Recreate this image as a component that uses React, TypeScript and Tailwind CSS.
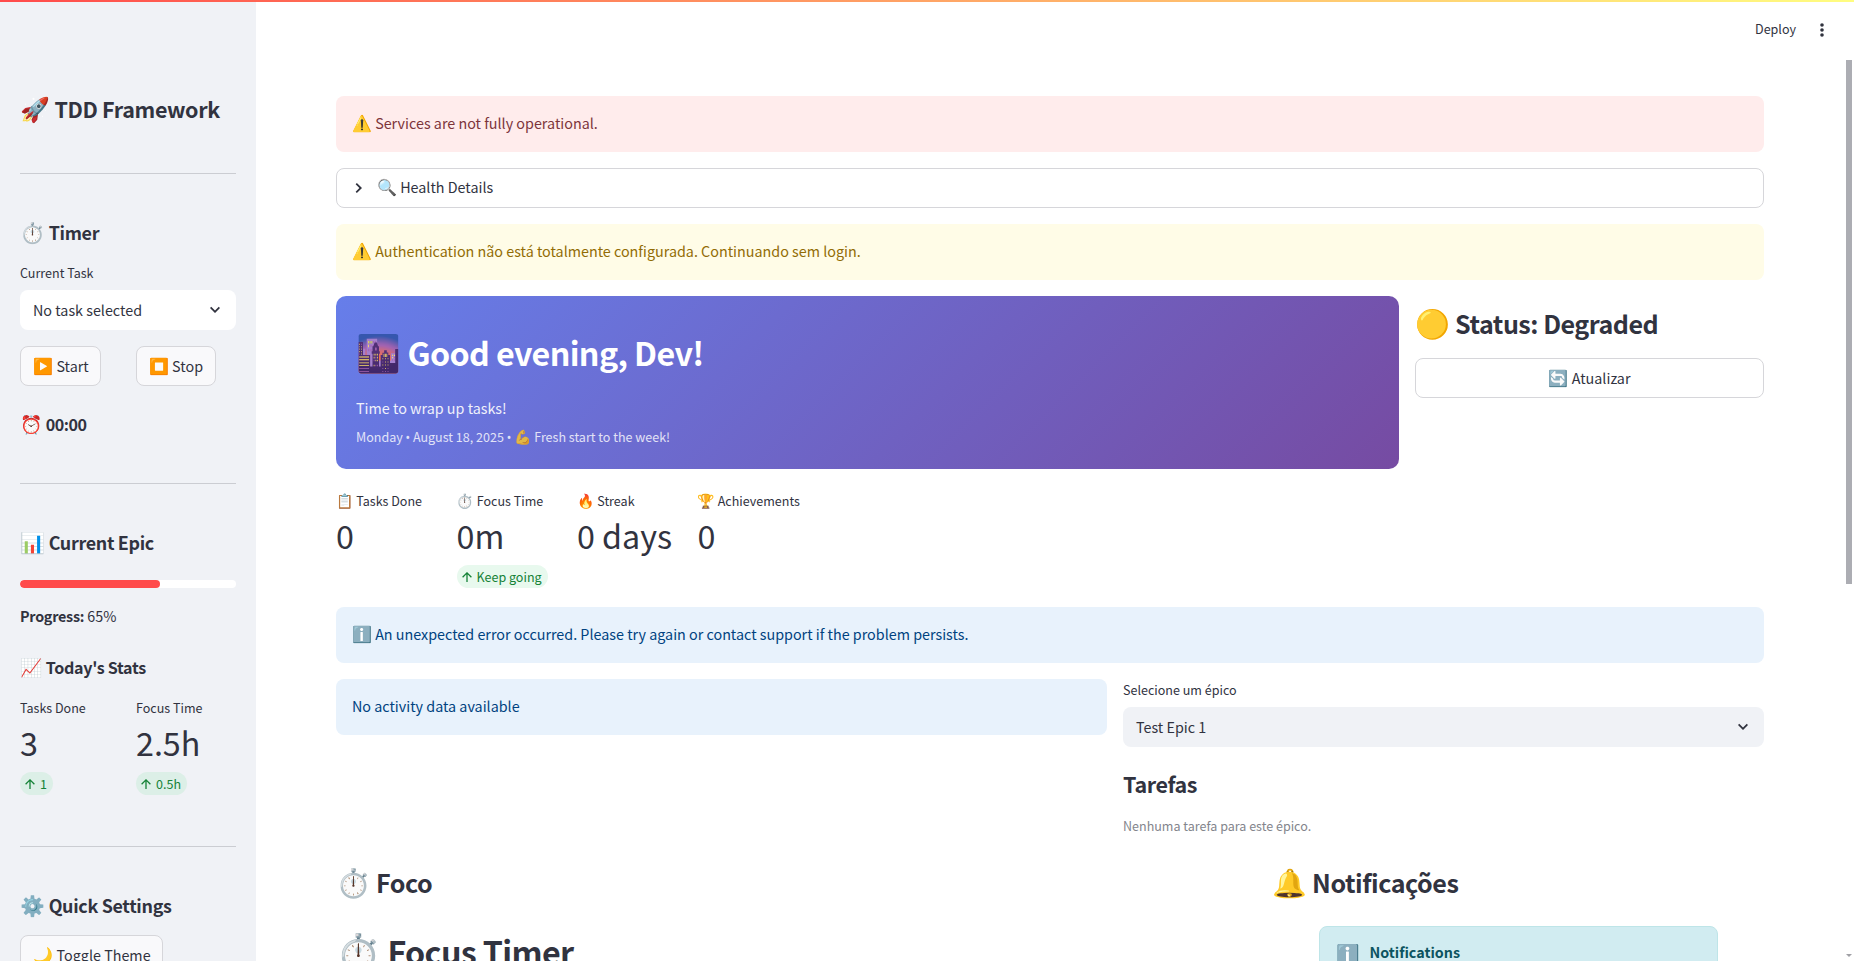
import type { ReactNode } from "react";

function Emoji({ children, className }: { children: ReactNode; className: string }) {
  return <span className={`font-normal leading-none tracking-normal ${className}`}>{children}</span>;
}

function Bullet() {
  return <span className="font-['Noto_Sans',sans-serif] text-[12px] leading-none">•</span>;
}

function Chevron({ className = "" }: { className?: string }) {
  return (
    <svg viewBox="0 0 8 8" className={className} fill="currentColor">
      <path d="M0 2.3l1-1 3 3 3-3 1 1-4 4.1z" />
    </svg>
  );
}

function Label({ icon, children }: { icon?: string; children: ReactNode }) {
  return (
    <div className="h-5 whitespace-nowrap text-[12.54px] leading-5">
      {icon && <Emoji className="text-[14px]">{icon}</Emoji>}
      {icon && " "}
      {children}
    </div>
  );
}

function Delta({ children, className }: { children: ReactNode; className: string }) {
  return (
    <div className={`flex h-[23px] w-fit items-center gap-[5px] rounded-full pl-[5px] pr-1.5 text-[12.54px] leading-[23px] whitespace-nowrap text-[#158237] ${className}`}>
      <svg viewBox="0 0 10 10" className="size-[10px]" fill="none" stroke="currentColor" strokeWidth="1.3">
        <path d="M5 10V1M.6 5.2L5 .9l4.4 4.3" />
      </svg>
      <span>{children}</span>
    </div>
  );
}

function Metric({ icon, label, value, delta, deltaClass = "bg-[#e8f9ee]" }: { icon?: string; label: string; value: string; delta?: string; deltaClass?: string }) {
  return (
    <div>
      <Label icon={icon}>{label}</Label>
      <div className="h-[54px] whitespace-nowrap text-[32.24px] leading-[49px]">{value}</div>
      {delta && <Delta className={deltaClass}>{delta}</Delta>}
    </div>
  );
}

function Button({ icon, children, className }: { icon: string; children: ReactNode; className: string }) {
  return (
    <button className={`h-10 shrink-0 whitespace-nowrap rounded-lg border border-[#d6d6da] text-center text-[14.33px] leading-[36px] ${className}`}>
      <Emoji className="text-[16px]">{icon}</Emoji> {children}
    </button>
  );
}

function Alert({ icon, children, className }: { icon?: string; children: ReactNode; className: string }) {
  return (
    <div className={`h-14 rounded-lg px-4 text-[14.33px] leading-[54px] ${className}`}>
      {icon && <Emoji className="text-[16px]">{icon}</Emoji>}
      {icon && " "}
      {children}
    </div>
  );
}

function Select({ children, className }: { children: ReactNode; className: string }) {
  return (
    <div className={`flex h-10 items-center justify-between rounded-lg pl-[13px] pr-4 text-[14.33px] leading-[39px] ${className}`}>
      <span className="h-10">{children}</span>
      <Chevron className="size-[10px]" />
    </div>
  );
}

function SideHeading({ icon, children }: { icon: string; children: ReactNode }) {
  return (
    <h2 className="h-6 whitespace-nowrap text-[17.9px] font-bold leading-[23px] tracking-[-0.32px]">
      <Emoji className="text-[20px]">{icon}</Emoji> {children}
    </h2>
  );
}

function Sidebar() {
  return (
    <aside className="h-full w-64 shrink-0 overflow-hidden bg-[#f0f2f6] px-5 pt-[93px]">
      <h1 className="h-[33px] whitespace-nowrap text-[21.5px] font-bold leading-8 tracking-[-0.34px]">
        <Emoji className="text-[24px]">🚀</Emoji> TDD Framework
      </h1>
      <hr className="mt-[47px] border-[#cbcdd2]" />
      <div className="mt-[47px]">
        <SideHeading icon="⏱️">Timer</SideHeading>
      </div>
      <div className="mt-[18px]">
        <Label>Current Task</Label>
      </div>
      <Select className="mt-[7px] bg-white">No task selected</Select>
      <div className="mt-4 flex">
        <Button icon="▶️" className="mr-[35px] w-[81px] bg-[#f9f9fb] pl-px">Start</Button>
        <Button icon="⏹️" className="w-20 bg-[#f9f9fb]">Stop</Button>
      </div>
      <div className="mt-[26px] h-6 text-[16.1px] font-bold leading-6 tracking-[-0.45px]">
        <Emoji className="text-[18px]">⏰</Emoji> 00:00
      </div>
      <hr className="mt-[47px] border-[#cbcdd2]" />
      <div className="mt-[47px]">
        <SideHeading icon="📊">Current Epic</SideHeading>
      </div>
      <div className="mt-[25px] h-2 overflow-hidden rounded-full bg-white">
        <div className="h-2 w-[65%] rounded-full bg-[#ff4b4b]" />
      </div>
      <div className="mt-4 h-6 text-[14.33px] leading-6">
        <b className="tracking-[-0.25px]">Progress:</b> 65%
      </div>
      <h3 className="mt-[27px] h-6 text-[16.1px] font-bold leading-6 tracking-[-0.3px]">
        <Emoji className="text-[18px]">📈</Emoji> Today's Stats
      </h3>
      <div className="mt-[19px] grid grid-cols-[100px_100px] gap-4">
        <Metric label="Tasks Done" value="3" delta="1" deltaClass="bg-[#dcefe7]" />
        <Metric label="Focus Time" value="2.5h" delta="0.5h" deltaClass="bg-[#dcefe7]" />
      </div>
      <hr className="mt-[51px] border-[#cbcdd2]" />
      <div className="mt-[47px]">
        <SideHeading icon="⚙️">Quick Settings</SideHeading>
      </div>
      <Button icon="🌙" className="mt-[17px] w-[143px] bg-[#f9f9fb] pl-px">Toggle Theme</Button>
    </aside>
  );
}

function Hero() {
  return (
    <section className="h-[173px] w-[1063px] rounded-[10px] bg-[linear-gradient(135deg,#667eea_0%,#764ba2_100%)] px-5 pt-8 text-white">
      <h1 className="h-12 whitespace-nowrap text-[32.24px] font-bold leading-[48px] tracking-[-0.63px]">
        <Emoji className="text-[36px]">🌆</Emoji> Good evening, Dev!
      </h1>
      <p className="mt-5 h-6 text-[14.33px] leading-6 opacity-90">Time to wrap up tasks!</p>
      <p className="mt-[7px] h-5 text-[12.54px] leading-5 opacity-80">
        Monday <Bullet /> August 18, 2025 <Bullet /> <Emoji className="text-[14px]">💪</Emoji> Fresh start to the week!
      </p>
    </section>
  );
}

function Main() {
  return (
    <main className="h-full w-[1598px] overflow-hidden bg-white pl-20">
      <header className="flex h-[60px] items-center justify-end pr-[30px] text-[12.54px]">
        <span className="mr-6 h-[22px] leading-5">Deploy</span>
        <svg viewBox="0 0 4 14" className="h-[14px] w-1" fill="currentColor">
          <circle cx="2" cy="2" r="1.8" />
          <circle cx="2" cy="7" r="1.8" />
          <circle cx="2" cy="12" r="1.8" />
        </svg>
      </header>
      <div className="flex w-[1428px] flex-col gap-4 pt-9">
        <Alert icon="⚠️" className="bg-[#ffecec] text-[#7d353b]">Services are not fully operational.</Alert>
        <div className="flex h-10 items-center rounded-lg border border-[#d6d6da] pl-[17px] text-[14.33px] leading-[36px]">
          <Chevron className="mr-[13px] size-[10px] -rotate-90" />
          <span className="h-[38px]"><Emoji className="text-[16px]">🔍</Emoji> Health Details</span>
        </div>
        <Alert icon="⚠️" className="bg-[#fffce7] text-[#926c05]">
          Authentication não está totalmente configurada. Continuando sem login.
        </Alert>
        <div className="flex gap-4">
          <Hero />
          <div className="w-[349px]">
            <h2 className="mt-2 h-[38px] whitespace-nowrap text-[25.07px] font-bold leading-[39px] tracking-[-0.48px]">
              <Emoji className="text-[28px]">🟡</Emoji> Status: Degraded
            </h2>
            <Button icon="🔄" className="mt-4 w-full bg-white">Atualizar</Button>
          </div>
        </div>
        <div className="mt-[6px] grid h-[100px] grid-cols-[104.5px_104.5px_104.5px_104.5px] gap-4">
          <Metric icon="📋" label="Tasks Done" value="0" />
          <Metric icon="⏱️" label="Focus Time" value="0m" delta="Keep going" />
          <Metric icon="🔥" label="Streak" value="0 days" />
          <Metric icon="🏆" label="Achievements" value="0" />
        </div>
        <Alert icon="ℹ️" className="bg-[#e8f2fc] text-[#004280]">
          An unexpected error occurred. Please try again or contact support if the problem persists.
        </Alert>
        <div className="flex h-[168px] gap-4">
          <Alert className="w-[771px] bg-[#e8f2fc] text-[#004280]">No activity data available</Alert>
          <div className="flex-1 pt-px">
            <Label>Selecione um épico</Label>
            <Select className="mt-[7px] bg-[#f0f2f6]">Test Epic 1</Select>
            <h3 className="mt-[21px] h-8 text-[21.5px] font-bold leading-8 tracking-[-0.4px]">Tarefas</h3>
            <p className="mt-4 text-[12.54px] leading-5 text-[#83858c]">Nenhuma tarefa para este épico.</p>
          </div>
        </div>
        <div className="flex">
          <div className="w-[936px]">
            <h2 className="h-[38px] text-[25.07px] font-bold leading-[38px] tracking-[-0.45px]">
              <Emoji className="text-[28px]">⏱️</Emoji> Foco
            </h2>
            <h1 className="mt-[22px] h-14 text-[32.24px] font-bold leading-[56px] tracking-[-0.65px]">
              <Emoji className="text-[36px]">⏱️</Emoji> Focus Timer
            </h1>
          </div>
          <div className="flex-1">
            <h2 className="h-[38px] text-[25.07px] font-bold leading-[38px] tracking-[-0.45px]">
              <Emoji className="text-[28px]">🔔</Emoji> Notificações
            </h2>
            <div className="ml-[47px] mt-[25px] flex h-20 w-[399px] rounded-lg border border-[#bee5e8] bg-[#d1ecf1] px-4 pt-[14px] text-[#0c5460]">
              <Emoji className="w-[33.5px] pt-[2px] text-[19px]">ℹ️</Emoji>
              <span className="text-[14.33px] font-bold leading-[22px]">Notifications</span>
            </div>
          </div>
        </div>
      </div>
    </main>
  );
}

export default function App() {
  return (
    <div className="relative flex h-[961px] w-[1854px] overflow-hidden bg-white font-['Noto_Sans_CJK_SC','Noto_Color_Emoji',sans-serif] text-[#31333f]">
      <Sidebar />
      <Main />
      <div className="absolute inset-x-0 top-0 h-[2px] bg-[linear-gradient(90deg,#ff4b4b,#fffd80)]" />
      <div className="absolute right-[2px] top-[60px] h-[524px] w-[6px] bg-[#acadb3]" />
      <svg viewBox="0 0 6 3" className="absolute bottom-[4px] right-[2px] h-[3px] w-[6px]" fill="#a0a0a5">
        <path d="M0 0h6L3 3z" />
      </svg>
    </div>
  );
}
